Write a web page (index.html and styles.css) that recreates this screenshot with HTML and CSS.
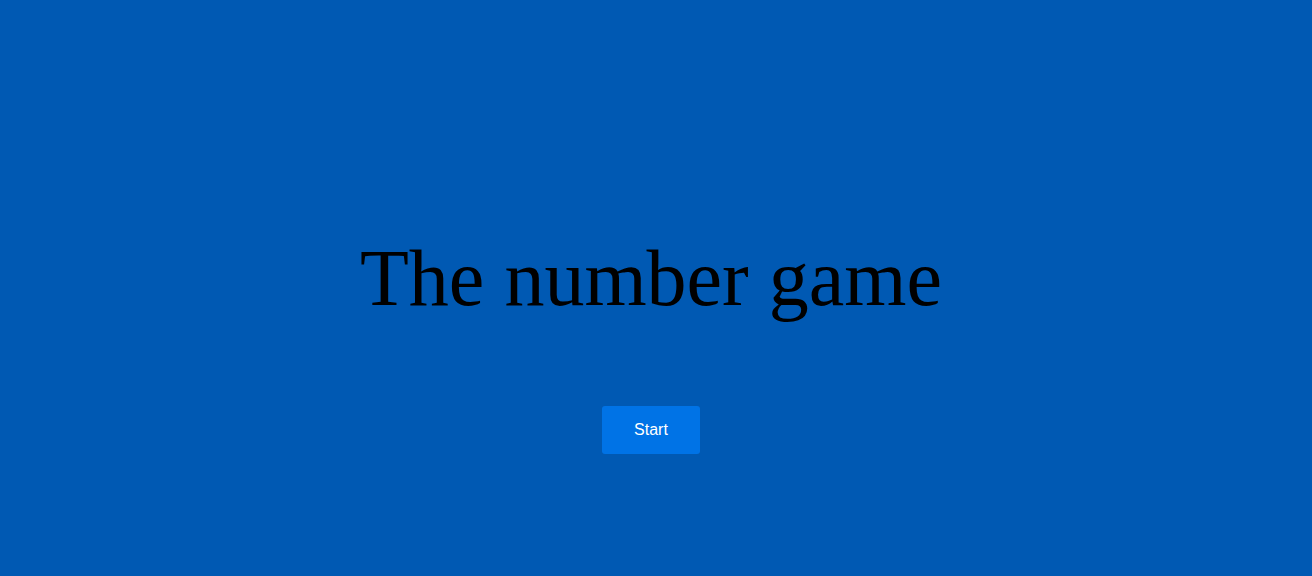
FILE: index.html
```html
<!DOCTYPE html>
<html>
<head>
<meta charset="utf-8">
<link rel="stylesheet" href="styles.css">
</head>
<body>
<main class="screen">
  <h1 class="title">The number game</h1>
  <button class="start">Start</button>
</main>
</body>
</html>
```
FILE: styles.css
```css
html, body {
  margin: 0;
  padding: 0;
  height: 100%;
}
body {
  background: #0059b3;
}
.screen {
  display: flex;
  flex-direction: column;
  align-items: center;
  padding-top: 233px;
  padding-right: 10px;
  box-sizing: border-box;
  min-height: 100vh;
}
.title {
  margin: 0;
  font-family: "Liberation Serif", "Times New Roman", serif;
  font-weight: normal;
  font-size: 80px;
  color: #000;
}
.start {
  margin-top: 82px;
  width: 98px;
  height: 48px;
  border: none;
  border-radius: 3px;
  background: #0073e6;
  color: #fff;
  font-family: "Liberation Sans", Arial, sans-serif;
  font-size: 16px;
  padding: 0;
  cursor: pointer;
}
```
